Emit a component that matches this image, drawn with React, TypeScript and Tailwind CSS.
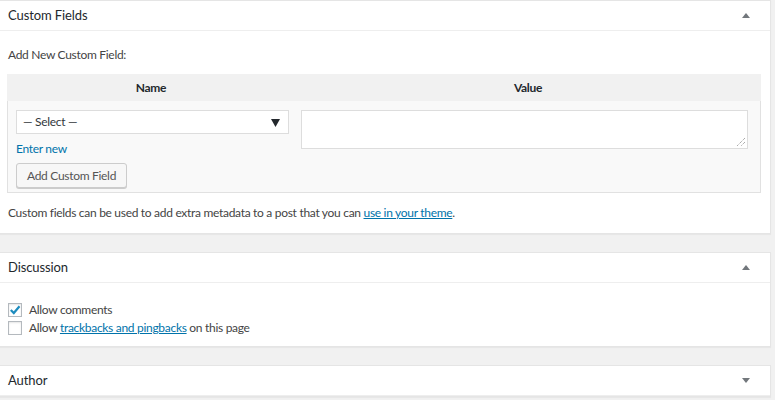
import React from "react";

const UpArrow = () => (
  <svg width="8" height="5" viewBox="0 0 8 5" className="block">
    <path d="M0 5 L4 0 L8 5 Z" fill="#72777c" />
  </svg>
);
const DownArrow = () => (
  <svg width="8" height="5" viewBox="0 0 8 5" className="block">
    <path d="M0 0 L4 5 L8 0 Z" fill="#72777c" />
  </svg>
);

function PanelHeader({ title, open }: { title: string; open: boolean }) {
  return (
    <div className="h-[30px] flex items-center justify-between pl-2 pr-[20px] border-b border-[#eeeeee]">
      <span className="text-[13px] tracking-[-0.1px] text-[#23282d] leading-[18px] -mt-px">{title}</span>
      {open ? <UpArrow /> : <DownArrow />}
    </div>
  );
}

export default function App() {
  return (
    <div className="w-[775px] h-[400px] bg-[#f1f1f1] overflow-hidden text-[12px] tracking-[-0.3px] text-[#444444] font-['Lato','Open_Sans',sans-serif]">
      <div className="w-[772px] ml-[-1px] flex flex-col gap-[18px]">
        {/* Custom Fields */}
        <div className="bg-white border border-[#e5e5e5] shadow-[0_1px_1px_rgba(0,0,0,0.04)] h-[234px]">
          <PanelHeader title="Custom Fields" open />
          <div className="pl-[8px] pr-[10px] pt-[15px]">
            <div className="leading-[18px]">Add New Custom Field:</div>
            <div className="mt-[10px] w-[754px] -ml-[1px]">
              <div className="h-[27px] bg-[#f1f1f1] flex font-bold text-[#23282d]">
                <div className="w-[288px] flex items-center justify-center">Name</div>
                <div className="flex-1 flex items-center justify-center">Value</div>
              </div>
              <div className="h-[92px] bg-[#f9f9f9] border border-t-0 border-[#e1e1e1] flex pt-[9px]">
                <div className="w-[288px] pl-[8px] pr-[7px] flex flex-col">
                  <div className="h-[24px] bg-white border border-[#dddddd] flex items-center justify-between pl-[6px] pr-[8px] text-[#32373c]">
                    <span>— Select —</span>
                    <svg width="9" height="9" viewBox="0 0 9 9">
                      <path d="M0 1 L9 1 L4.5 9 Z" fill="#23282d" />
                    </svg>
                  </div>
                  <a className="mt-[6px] text-[#0073aa] leading-[18px] cursor-pointer">Enter new</a>
                  <div className="mt-[5px]">
                    <button className="h-[25px] px-[10px] bg-[#f7f7f7] border border-[#cccccc] rounded-[3px] text-[#555555] shadow-[0_1px_0_#cccccc] leading-[22px]">
                      Add Custom Field
                    </button>
                  </div>
                </div>
                <div className="flex-1 pl-[5px] pr-[12px]">
                  <div className="h-[39px] bg-white border border-[#dddddd] relative">
                    <svg width="10" height="10" viewBox="0 0 10 10" className="absolute right-[1px] bottom-[1px]">
                      <path d="M9 1 L1 9 M9 5 L5 9" stroke="#888888" strokeWidth="1" strokeDasharray="1 1" />
                    </svg>
                  </div>
                </div>
              </div>
            </div>
            <div className="mt-[11px] leading-[18px]">
              Custom fields can be used to add extra metadata to a post that you can{" "}
              <a className="text-[#0073aa] underline cursor-pointer">use in your theme</a>.
            </div>
          </div>
        </div>

        {/* Discussion */}
        <div className="bg-white border border-[#e5e5e5] shadow-[0_1px_1px_rgba(0,0,0,0.04)] h-[95px]">
          <PanelHeader title="Discussion" open />
          <div className="pl-[8px] pt-[20px] flex flex-col gap-[4px]">
            <label className="flex items-center gap-[7px] leading-[14px]">
              <span className="w-[14px] h-[14px] border border-[#b4b9be] bg-white shadow-[inset_0_1px_2px_rgba(0,0,0,0.1)] flex items-center justify-center">
                <svg width="12" height="12" viewBox="0 0 12 12">
                  <path d="M1.8 6 L4.8 9 L10.5 2.2" stroke="#1e8cbe" strokeWidth="2.2" fill="none" />
                </svg>
              </span>
              <span>Allow comments</span>
            </label>
            <label className="flex items-center gap-[7px] leading-[14px]">
              <span className="w-[14px] h-[14px] border border-[#b4b9be] bg-white shadow-[inset_0_1px_2px_rgba(0,0,0,0.1)]" />
              <span>
                Allow <a className="text-[#0073aa] underline cursor-pointer">trackbacks and pingbacks</a> on this page
              </span>
            </label>
          </div>
        </div>

        {/* Author */}
        <div className="bg-white border border-[#e5e5e5] shadow-[0_1px_1px_rgba(0,0,0,0.04)]">
          <PanelHeader title="Author" open={false} />
        </div>
      </div>
    </div>
  );
}
